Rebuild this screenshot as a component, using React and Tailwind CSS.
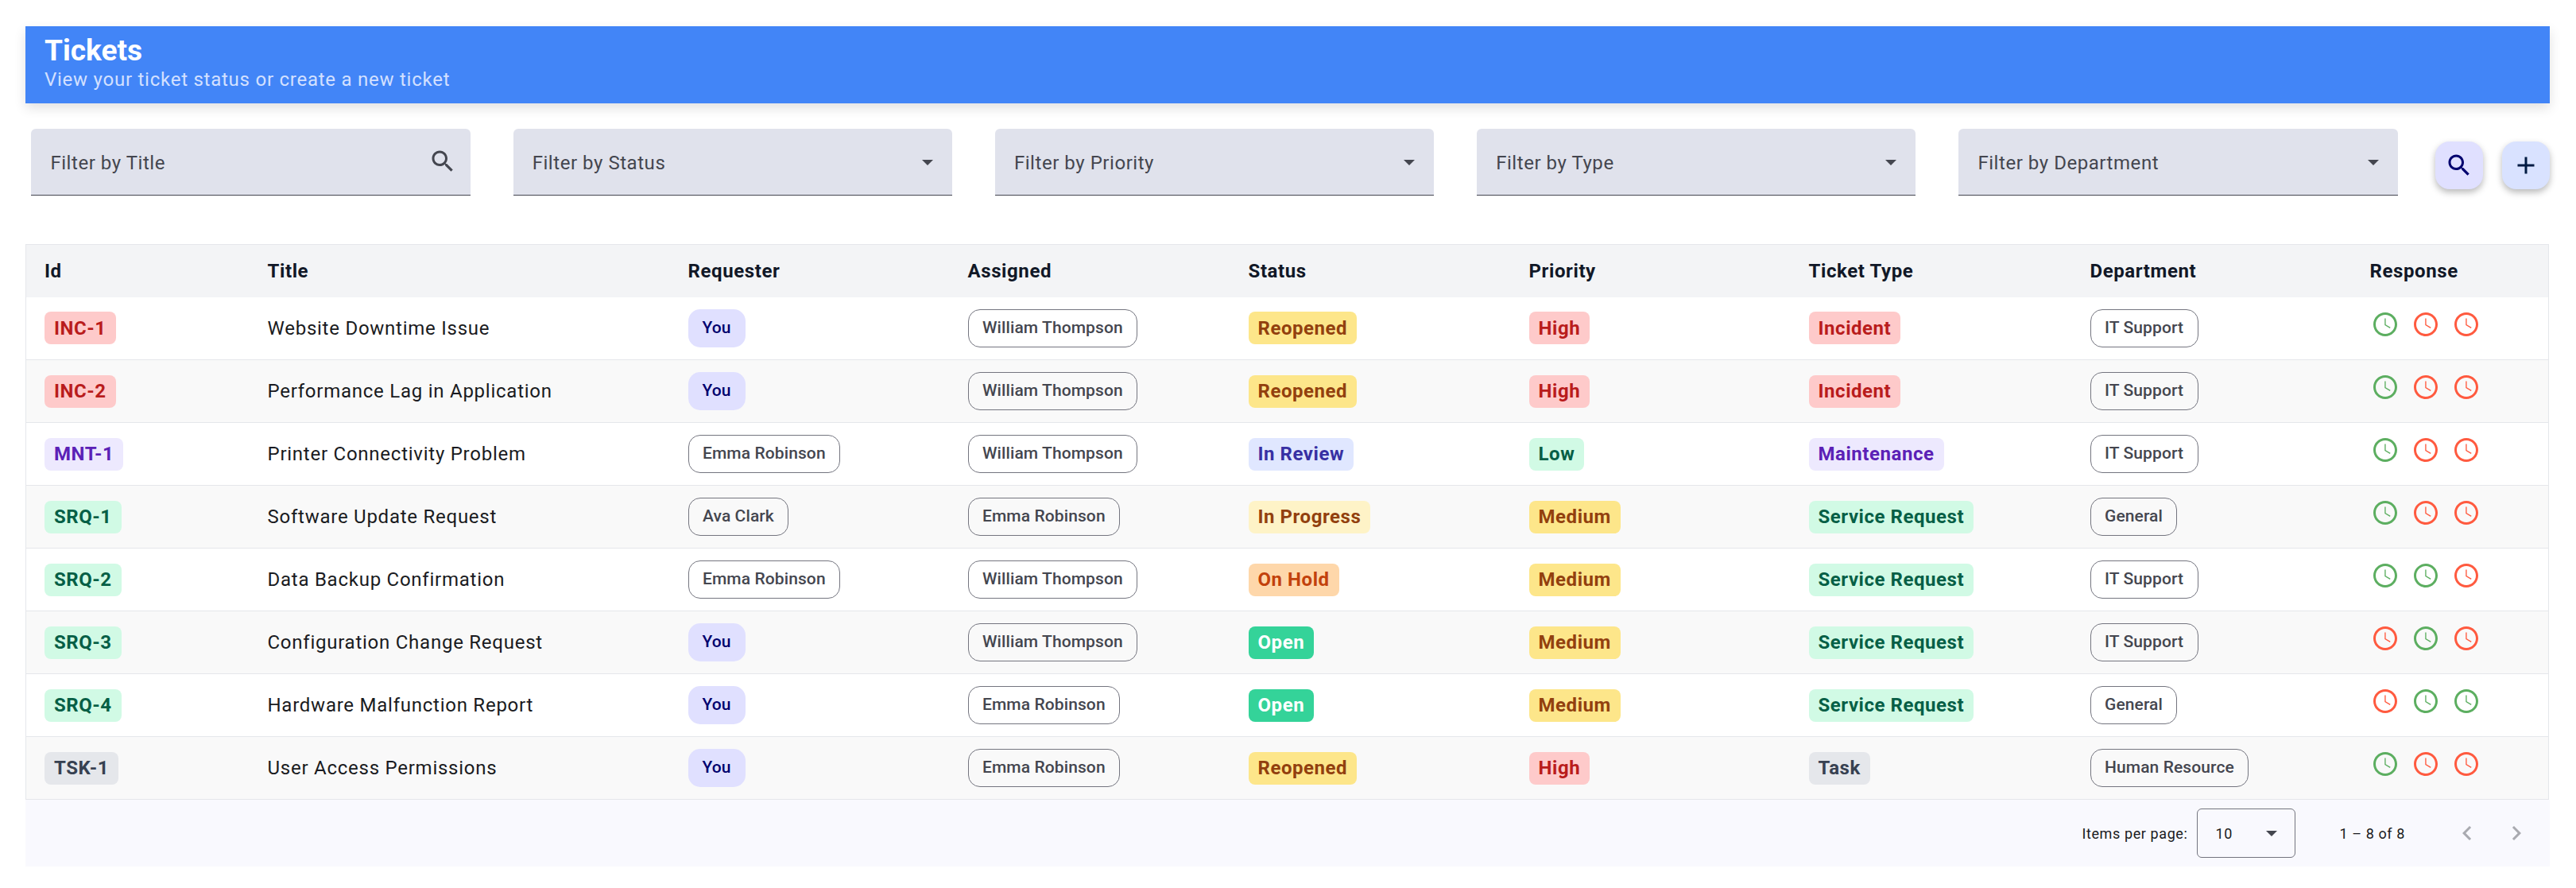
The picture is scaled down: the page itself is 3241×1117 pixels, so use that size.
import React from 'react';

const SEARCH = "M15.5 14h-.79l-.28-.27C15.41 12.59 16 11.11 16 9.5 16 5.91 13.09 3 9.5 3S3 5.91 3 9.5 5.91 16 9.5 16c1.61 0 3.09-.59 4.23-1.57l.27.28v.79l5 4.99L20.49 19l-4.99-5zm-6 0C7.01 14 5 11.99 5 9.5S7.01 5 9.5 5 14 7.01 14 9.5 11.99 14 9.5 14z";

function Icon({ d, className }) {
  return <svg viewBox="0 0 24 24" className={className} fill="currentColor"><path d={d} /></svg>;
}

function Clock({ c }) {
  const cls = c === 'g' ? 'text-[#5cae60]' : 'text-[#ff5a3f]';
  return (
    <svg viewBox="2 2 20 20" className={`w-[30px] h-[30px] ${cls}`} fill="currentColor">
      <path d="M11.99 2C6.47 2 2 6.48 2 12s4.47 10 9.99 10C17.52 22 22 17.52 22 12S17.52 2 11.99 2zM12 20c-4.42 0-8-3.58-8-8s3.58-8 8-8 8 3.58 8 8-3.58 8-8 8z" />
      <path d="M12.4 7h-.9v5.6l4.4 2.7.5-.8-4-2.4z" />
    </svg>
  );
}

const TONES = {
  red: 'bg-[#fecaca] text-[#b91c1c]',
  amber: 'bg-[#fde68a] text-[#92400e]',
  yellow: 'bg-[#fef3c7] text-[#92400e]',
  indigo: 'bg-[#e0e7ff] text-[#3730a3]',
  green: 'bg-[#d1fae5] text-[#065f46]',
  open: 'bg-[#34d399] text-white',
  orange: 'bg-[#fed7aa] text-[#c2410c]',
  purple: 'bg-[#ede9fe] text-[#5b21b6]',
  gray: 'bg-[#e5e7eb] text-[#374151]',
};

function Badge({ tone, children }) {
  return (
    <span className={`inline-flex items-center h-[41px] px-[12px] rounded-[8px] text-[24px] tracking-[0.55px] font-bold whitespace-nowrap ${TONES[tone]}`}>
      {children}
    </span>
  );
}

function Chip({ children }) {
  if (children === 'You') {
    return (
      <span className="inline-flex items-center h-[48px] px-[18px] rounded-[15px] bg-[#e0e0ff] text-[#00006e] text-[21px] tracking-[0.1px] font-medium whitespace-nowrap">
        You
      </span>
    );
  }
  return (
    <span className="inline-flex items-center h-[48px] px-[17.5px] rounded-[15px] border-[1.5px] border-[#74757f] text-[#44464f] text-[21px] tracking-[0.1px] font-medium whitespace-nowrap">
      {children}
    </span>
  );
}

const W = 'William Thompson';
const E = 'Emma Robinson';
const ROWS = [
  ['INC-1', 'red', 'Website Downtime Issue', 'You', W, 'Reopened', 'amber', 'High', 'red', 'Incident', 'red', 'IT Support', 'grr'],
  ['INC-2', 'red', 'Performance Lag in Application', 'You', W, 'Reopened', 'amber', 'High', 'red', 'Incident', 'red', 'IT Support', 'grr'],
  ['MNT-1', 'purple', 'Printer Connectivity Problem', E, W, 'In Review', 'indigo', 'Low', 'green', 'Maintenance', 'purple', 'IT Support', 'grr'],
  ['SRQ-1', 'green', 'Software Update Request', 'Ava Clark', E, 'In Progress', 'yellow', 'Medium', 'amber', 'Service Request', 'green', 'General', 'grr'],
  ['SRQ-2', 'green', 'Data Backup Confirmation', E, W, 'On Hold', 'orange', 'Medium', 'amber', 'Service Request', 'green', 'IT Support', 'ggr'],
  ['SRQ-3', 'green', 'Configuration Change Request', 'You', W, 'Open', 'open', 'Medium', 'amber', 'Service Request', 'green', 'IT Support', 'rgr'],
  ['SRQ-4', 'green', 'Hardware Malfunction Report', 'You', E, 'Open', 'open', 'Medium', 'amber', 'Service Request', 'green', 'General', 'rgg'],
  ['TSK-1', 'gray', 'User Access Permissions', 'You', E, 'Reopened', 'amber', 'High', 'red', 'Task', 'gray', 'Human Resource', 'grr'],
];

const HEAD = [
  ['Id', 'w-[281px]'], ['Title', 'w-[529px]'], ['Requester', 'w-[352px]'], ['Assigned', 'w-[353px]'],
  ['Status', 'w-[353px]'], ['Priority', 'w-[352px]'], ['Ticket Type', 'w-[354px]'], ['Department', 'w-[352px]'], ['Response', ''],
];

function Filter({ label, search }) {
  return (
    <div className="w-[552.25px] h-[84px] flex items-center justify-between pl-[24px] pr-[20px] pt-[2px] rounded-t-[6px] bg-[#e0e2ec] border-b border-[#44464f] text-[#44464f] text-[24px] tracking-[0.55px]">
      <span>{label}</span>
      {search
        ? <Icon d={SEARCH} className="w-[36px] h-[36px] text-[#44464f] mr-[-3px] mt-[-4px]" />
        : <span className="w-0 h-0 mr-[4px] border-x-[7.5px] border-x-transparent border-t-[7.5px] border-t-[#44464f]" />}
    </div>
  );
}

export default function App() {
  return (
    <div className="w-[3241px] h-[1117px] bg-white pt-[33px] px-[32px] font-['Roboto',sans-serif] overflow-hidden">
      <header className="w-[3176px] h-[97px] pl-[24px] pt-[9px] bg-[#4285f7] text-white shadow-[0_6px_14px_rgba(0,0,0,0.12)]">
        <h1 className="text-[37px] leading-[44px] font-bold">Tickets</h1>
        <p className="text-[24px] leading-[28px] tracking-[0.75px] text-[#d3e0ff]">View your ticket status or create a new ticket</p>
      </header>

      <div className="flex items-start w-[3176px] mt-[32px] pl-[7.4px]">
        <div className="flex gap-[54px]">
          <Filter label="Filter by Title" search />
          <Filter label="Filter by Status" />
          <Filter label="Filter by Priority" />
          <Filter label="Filter by Type" />
          <Filter label="Filter by Department" />
        </div>
        <div className="flex gap-[24px] ml-auto mt-[16px]">
          <button className="w-[60px] h-[60px] rounded-[18px] bg-[#e0e0ff] text-[#00006e] flex items-center justify-center shadow-[0_4px_8px_rgba(0,0,0,0.28)]">
            <Icon d={SEARCH} className="w-[36px] h-[36px]" />
          </button>
          <button className="w-[60px] h-[60px] rounded-[18px] bg-[#d9e2ff] text-[#001a43] flex items-center justify-center shadow-[0_4px_8px_rgba(0,0,0,0.28)]">
            <Icon d="M19 13h-6v6h-2v-6H5v-2h6V5h2v6h6v2z" className="w-[36px] h-[36px]" />
          </button>
        </div>
      </div>

      <table className="w-[3175px] table-fixed border-collapse mt-[61px] border border-[#e5e7eb] text-[#1a1b21]">
        <thead>
          <tr className="h-[66px] bg-[#f3f4f6]">
            {HEAD.map(([t, w]) => (
              <th key={t} className={`${w} pl-[23px] text-left text-[24px] tracking-[0.6px] font-bold text-[#111827]`}>{t}</th>
            ))}
          </tr>
        </thead>
        <tbody>
          {ROWS.map((r, i) => (
            <tr key={r[0]} className={`h-[79px] border-t border-[#e5e7eb] first:border-t-0 ${i % 2 ? 'bg-[#f9f9f9]' : 'bg-white'}`}>
              <td className="pl-[23px]"><Badge tone={r[1]}>{r[0]}</Badge></td>
              <td className="pl-[23px] text-[24px] tracking-[0.75px] whitespace-nowrap">{r[2]}</td>
              <td className="pl-[23px]"><Chip>{r[3]}</Chip></td>
              <td className="pl-[23px]"><Chip>{r[4]}</Chip></td>
              <td className="pl-[23px]"><Badge tone={r[6]}>{r[5]}</Badge></td>
              <td className="pl-[23px]"><Badge tone={r[8]}>{r[7]}</Badge></td>
              <td className="pl-[23px]"><Badge tone={r[10]}>{r[9]}</Badge></td>
              <td className="pl-[23px]"><Chip>{r[11]}</Chip></td>
              <td className="pl-[27px]">
                <div className="flex gap-[21px] mb-[10px]">
                  {r[12].split('').map((c, k) => <Clock key={k} c={c} />)}
                </div>
              </td>
            </tr>
          ))}
        </tbody>
      </table>

      <footer className="w-[3176px] h-[84px] flex items-center justify-end bg-[#f9f9fe] text-[18px] tracking-[0.6px] text-[#1a1b21] pr-[24px]">
        <span className="mr-[12px]">Items per page:</span>
        <div className="w-[124px] h-[62px] flex items-center justify-between pl-[22px] pr-[22px] rounded-[6px] border-[1.5px] border-[#74757f]">
          <span>10</span>
          <span className="w-0 h-0 border-x-[7.5px] border-x-transparent border-t-[7.5px] border-t-[#44464f]" />
        </div>
        <span className="ml-[55px] mr-[60px]">1 – 8 of 8</span>
        <div className="flex gap-[26px] text-[#a9aab0]">
          <Icon d="M15.41 7.41 14 6l-6 6 6 6 1.41-1.41L10.83 12z" className="w-[36px] h-[36px]" />
          <Icon d="M10 6 8.59 7.41 13.17 12l-4.58 4.59L10 18l6-6z" className="w-[36px] h-[36px]" />
        </div>
      </footer>
    </div>
  );
}
